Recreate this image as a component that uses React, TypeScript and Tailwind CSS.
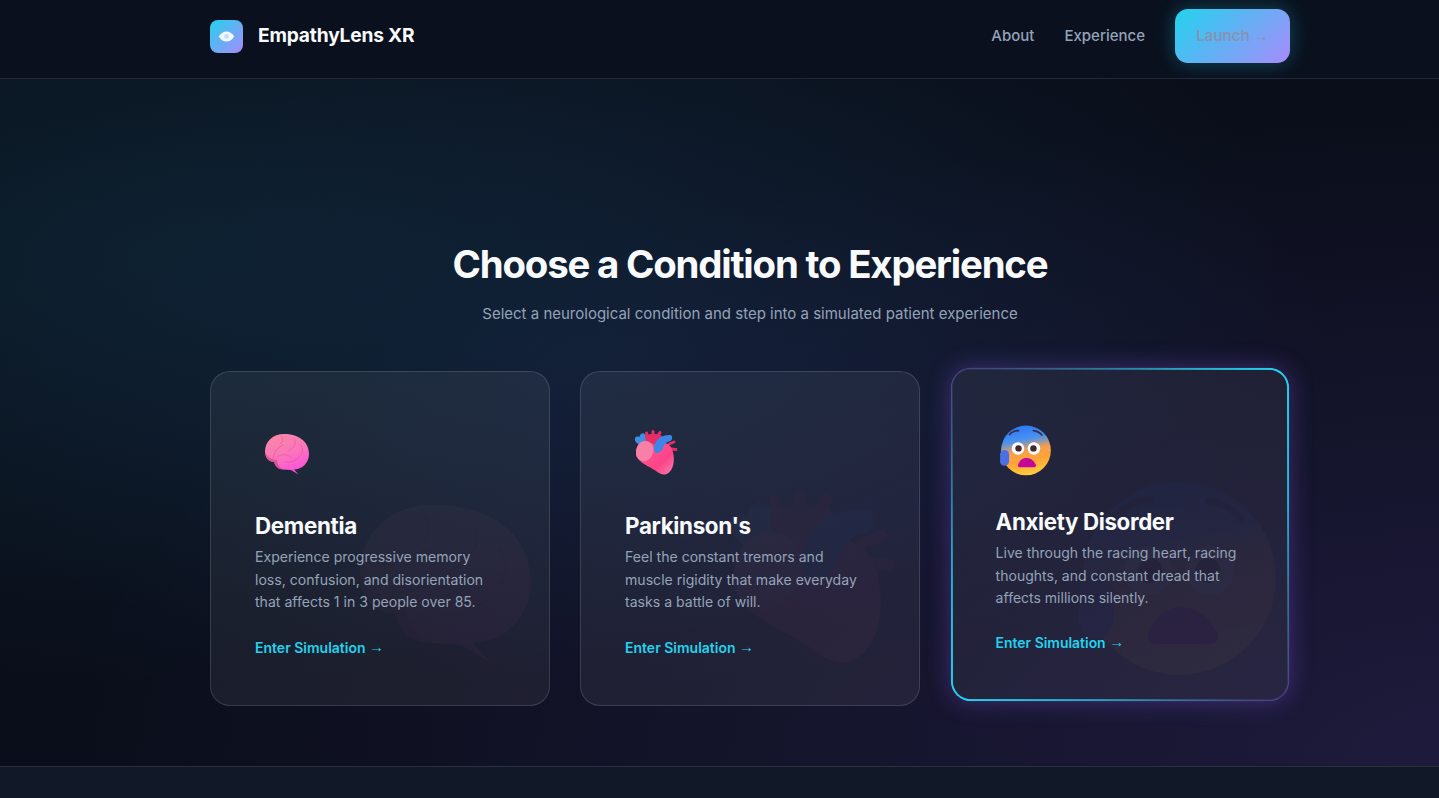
import React from "react";

function Brain({ id }: { id: string }) {
  return (
    <svg viewBox="0 0 60 60" className="block h-full w-full">
      <defs>
        <linearGradient id={`${id}a`} x1="0.15" y1="0" x2="0.6" y2="1">
          <stop offset="0" stopColor="#f98aa6" />
          <stop offset="0.55" stopColor="#fb74bc" />
          <stop offset="1" stopColor="#fd4fdc" />
        </linearGradient>
      </defs>
      <path d="M10 28C10 17 18 10 29 10C43 10 54 17 54 30C54 39 47 45.500 39 45.500L43.500 50.500L36 46L28 45.500C23 45.500 20 42 19 38C14 38 10 34 10 28Z" fill={`url(#${id}a)`} />
      <path d="M10 28C10 34 14 38 19 38C20 42 23 45.500 28 45.500C24 43 22 40 22 36C17 36 12 33 10 28Z" fill="#c9407f" opacity="0.6" />
      <g fill="none" stroke="#dc4f84" strokeWidth="0.7" strokeLinecap="round" opacity="0.75">
        <path d="M18 35C19 28 22 24 28 21" />
        <path d="M26 12C29 15 28 18 25 20" />
        <path d="M40 16C41 21 38 25 33 27" />
        <path d="M22 33C27 30 31 30 36 33" />
        <path d="M30 38C35 39 41 37 44 33" />
        <path d="M46 21C48 25 48 28 46 31" />
      </g>
    </svg>
  );
}

function Heart({ id }: { id: string }) {
  return (
    <svg viewBox="0 0 60 60" className="block h-full w-full">
      <defs>
        <linearGradient id={`${id}a`} x1="0.1" y1="0.1" x2="0.95" y2="0.85">
          <stop offset="0" stopColor="#fb5c92" />
          <stop offset="0.7" stopColor="#fd4388" />
          <stop offset="1" stopColor="#f86fa6" />
        </linearGradient>
      </defs>
      <path d="M44 20L49 18M46 25L51 25.500" stroke="#e92d64" strokeWidth="2.800" strokeLinecap="round" />
      <path d="M22 12L21.500 9M28 11L28 7.500M33.500 11L35 8.500" stroke="#e92d64" strokeWidth="3" strokeLinecap="round" />
      <path d="M10.500 17.500C8.500 13.500 11.500 11.500 14.500 13C15 8.500 20 8 21 12.500L22 18L16 23Z" fill="#3d8fe0" />
      <path d="M20 12C24 9 33 9 37 12L38 22L22 24Z" fill="#e72c66" />
      <path d="M11 29C11 22 15 16.500 21 17C26 17.500 27 21 31 21C37 18 44 18 47 25C50 33 49.500 43 44.500 48C40 52 36 51 31 47C24 42 11 38 11 29Z" fill={`url(#${id}a)`} />
      <path d="M11 29C11 22 15 16.500 21 17C26 18 30 22 28 29C26 36 20 38 17 37C13 35 11 33 11 29Z" fill="#f77fa8" />
      <path d="M29 26C28.500 21 31 15.500 36 13C39 11.500 44 10.500 46.500 11.500C48 14 47 17 44 17.500C41 18 39 20.500 38 24C37 29 30 31 29 26Z" fill="#3b86e6" />
    </svg>
  );
}

function Face({ id }: { id: string }) {
  return (
    <svg viewBox="0 0 60 60" className="block h-full w-full">
      <defs>
        <linearGradient id={`${id}a`} x1="0.4" y1="0" x2="0.6" y2="1">
          <stop offset="0.05" stopColor="#2f7cf6" />
          <stop offset="0.28" stopColor="#4a92f0" />
          <stop offset="0.5" stopColor="#f5a04e" />
          <stop offset="0.7" stopColor="#ffa338" />
          <stop offset="1" stopColor="#ffcf3c" />
        </linearGradient>
      </defs>
      <circle cx="30.500" cy="30" r="25" fill={`url(#${id}a)`} />
      <path d="M14 14C16 11.500 19.500 10 23 10M38 10C41.500 10.500 44.500 12 46.500 14.500" fill="none" stroke="#402a4a" strokeWidth="1.800" strokeLinecap="round" />
      <circle cx="22.500" cy="28" r="6.300" fill="#fff" />
      <circle cx="38.500" cy="28" r="6.300" fill="#fff" />
      <circle cx="23" cy="28" r="3.200" fill="#43262e" />
      <circle cx="38" cy="28" r="3.200" fill="#43262e" />
      <path d="M22.500 44.500C24 40 27 37.500 31 37.500C35 37.500 38.500 40 40.500 44.500C41 46.500 39.500 47 38 47L25 47C23 47 22 46.500 22.500 44.500Z" fill="#c4079a" />
      <rect x="4.500" y="29.500" width="9" height="16" rx="4.400" fill="#4b6fe8" />
    </svg>
  );
}

type C = { title: string; lines: string[]; icon: "b" | "h" | "f" };

const cards: C[] = [
  { title: "Dementia", icon: "b", lines: ["Experience progressive memory", "loss, confusion, and disorientation", "that affects 1 in 3 people over 85."] },
  { title: "Parkinson's", icon: "h", lines: ["Feel the constant tremors and", "muscle rigidity that make everyday", "tasks a battle of will."] },
  { title: "Anxiety Disorder", icon: "f", lines: ["Live through the racing heart, racing", "thoughts, and constant dread that", "affects millions silently."] },
];

function Icon({ kind, id }: { kind: C["icon"]; id: string }) {
  if (kind === "b") return <Brain id={id} />;
  if (kind === "h") return <Heart id={id} />;
  return <Face id={id} />;
}

function Arrow() {
  return <span className="inline-block -translate-y-px font-['Liberation_Sans',sans-serif] text-[15px] font-normal leading-none">→</span>;
}

function Card({ c }: { c: C }) {
  const active = c.icon === "f";
  return (
    <div
      className={
        active
          ? "relative h-[335px] w-[340px] -translate-y-1 scale-[0.995] rounded-[20px] border border-[#a78bfa]/30 bg-white/[0.06] px-[44px] pt-[44px] shadow-[0_0_24px_rgba(139,92,246,0.32)]"
          : "relative h-[335px] w-[340px] rounded-[20px] border border-white/[0.13] bg-white/[0.06] px-[44px] pt-[44px]"
      }
    >
      <div className="absolute inset-0 overflow-hidden rounded-[19px]">
        <div className={active ? "absolute bottom-[6px] right-[-5px] h-[233px] w-[233px] opacity-[0.03]" : "absolute bottom-[6px] right-[-5px] h-[233px] w-[233px] opacity-[0.035]"}>
          <Icon kind={c.icon} id={`w${c.icon}`} />
        </div>
      </div>
      {active && (
        <div className="absolute inset-[-1px] rounded-[20px] p-[2px] [background:conic-gradient(from_315deg,rgba(139,92,246,0.1)_0deg,rgba(34,211,238,0.5)_50deg,rgba(34,211,238,1)_90deg,rgba(34,211,238,0.75)_125deg,rgba(139,92,246,0.1)_180deg,rgba(34,211,238,0.6)_225deg,rgba(34,211,238,1)_270deg,rgba(34,211,238,0.7)_305deg,rgba(139,92,246,0.1)_360deg)] [mask:linear-gradient(#fff_0_0)_content-box_exclude,linear-gradient(#fff_0_0)]" />
      )}
      <div className="relative">
        <div className="mb-[28px] mt-[8px] h-[60px] w-[60px]">
          <Icon kind={c.icon} id={`i${c.icon}`} />
        </div>
        <h3 className="text-[22.4px] font-bold leading-[28px] tracking-[-0.015em] text-[#f8fafc]">{c.title}</h3>
        <p className="mt-[6px] text-[14.08px] leading-[22.7px] text-[#94a3b8]">
          {c.lines.map((l) => (
            <span key={l} className="block whitespace-nowrap">{l}</span>
          ))}
        </p>
        <div className="mt-[24px] text-[14px] font-semibold leading-[20px] text-[#22d3ee]">
          Enter Simulation <Arrow />
        </div>
      </div>
    </div>
  );
}

export default function App() {
  return (
    <div className="h-[798px] overflow-hidden bg-[#0a0e1a] font-['Inter',sans-serif]">
      <div className="flex h-[798px] w-[1500px] flex-col">
        <nav className="flex h-[79px] shrink-0 items-start justify-between border-b border-white/10 bg-[#0a101e] px-[210px] pt-[9px]">
          <div className="flex h-[54px] items-center gap-[15px]">
            <div className="flex h-[33px] w-[33px] items-center justify-center rounded-[8px] bg-[linear-gradient(135deg,#22d3ee,#a78bfa)]">
              <svg viewBox="0 0 18 12" className="h-[11px] w-[17px]">
                <path d="M0.500 6C3 2 6 0.500 9 0.500C12 0.500 15 2 17.500 6C15 10 12 11.500 9 11.500C6 11.500 3 10 0.500 6Z" fill="#f4f8fd" />
                <circle cx="9" cy="6" r="2.600" fill="#c9dcf6" />
              </svg>
            </div>
            <span className="text-[19.2px] font-bold leading-none tracking-[-0.01em] text-[#f8fafc]">EmpathyLens XR</span>
          </div>
          <div className="flex h-[54px] items-center gap-[30px]">
            <span className="text-[15px] font-medium text-[#94a3b8]">About</span>
            <span className="text-[15px] font-medium text-[#94a3b8]">Experience</span>
            <div className="flex h-[54px] w-[115px] items-center justify-center gap-[4px] rounded-[13px] bg-[linear-gradient(135deg,#22d3ee,#a78bfa)] text-[15px] font-semibold text-[#8494b4] shadow-[0_0_20px_rgba(34,211,238,0.3)]">
              Launch <Arrow />
            </div>
          </div>
        </nav>
        <main className="flex h-[687px] shrink-0 flex-col items-center bg-[radial-gradient(ellipse_at_12%_25%,rgba(34,211,238,0.085),transparent_60%),radial-gradient(ellipse_at_40%_40%,rgba(70,100,220,0.09),transparent_58%),radial-gradient(ellipse_at_100%_100%,rgba(139,92,246,0.16),transparent_68%)] pt-[161px]">
          <h2 className="text-[38.4px] font-bold leading-[48px] tracking-[-1.2px] text-[#f8fafc]">Choose a Condition to Experience</h2>
          <p className="mt-[14px] text-[15px] leading-[24px] text-[#94a3b8]">Select a neurological condition and step into a simulated patient experience</p>
          <div className="mt-[45px] flex gap-[30px]">
            {cards.map((c) => (
              <Card key={c.title} c={c} />
            ))}
          </div>
        </main>
        <footer className="flex-1 border-t border-white/10 bg-[#111827]" />
      </div>
    </div>
  );
}
